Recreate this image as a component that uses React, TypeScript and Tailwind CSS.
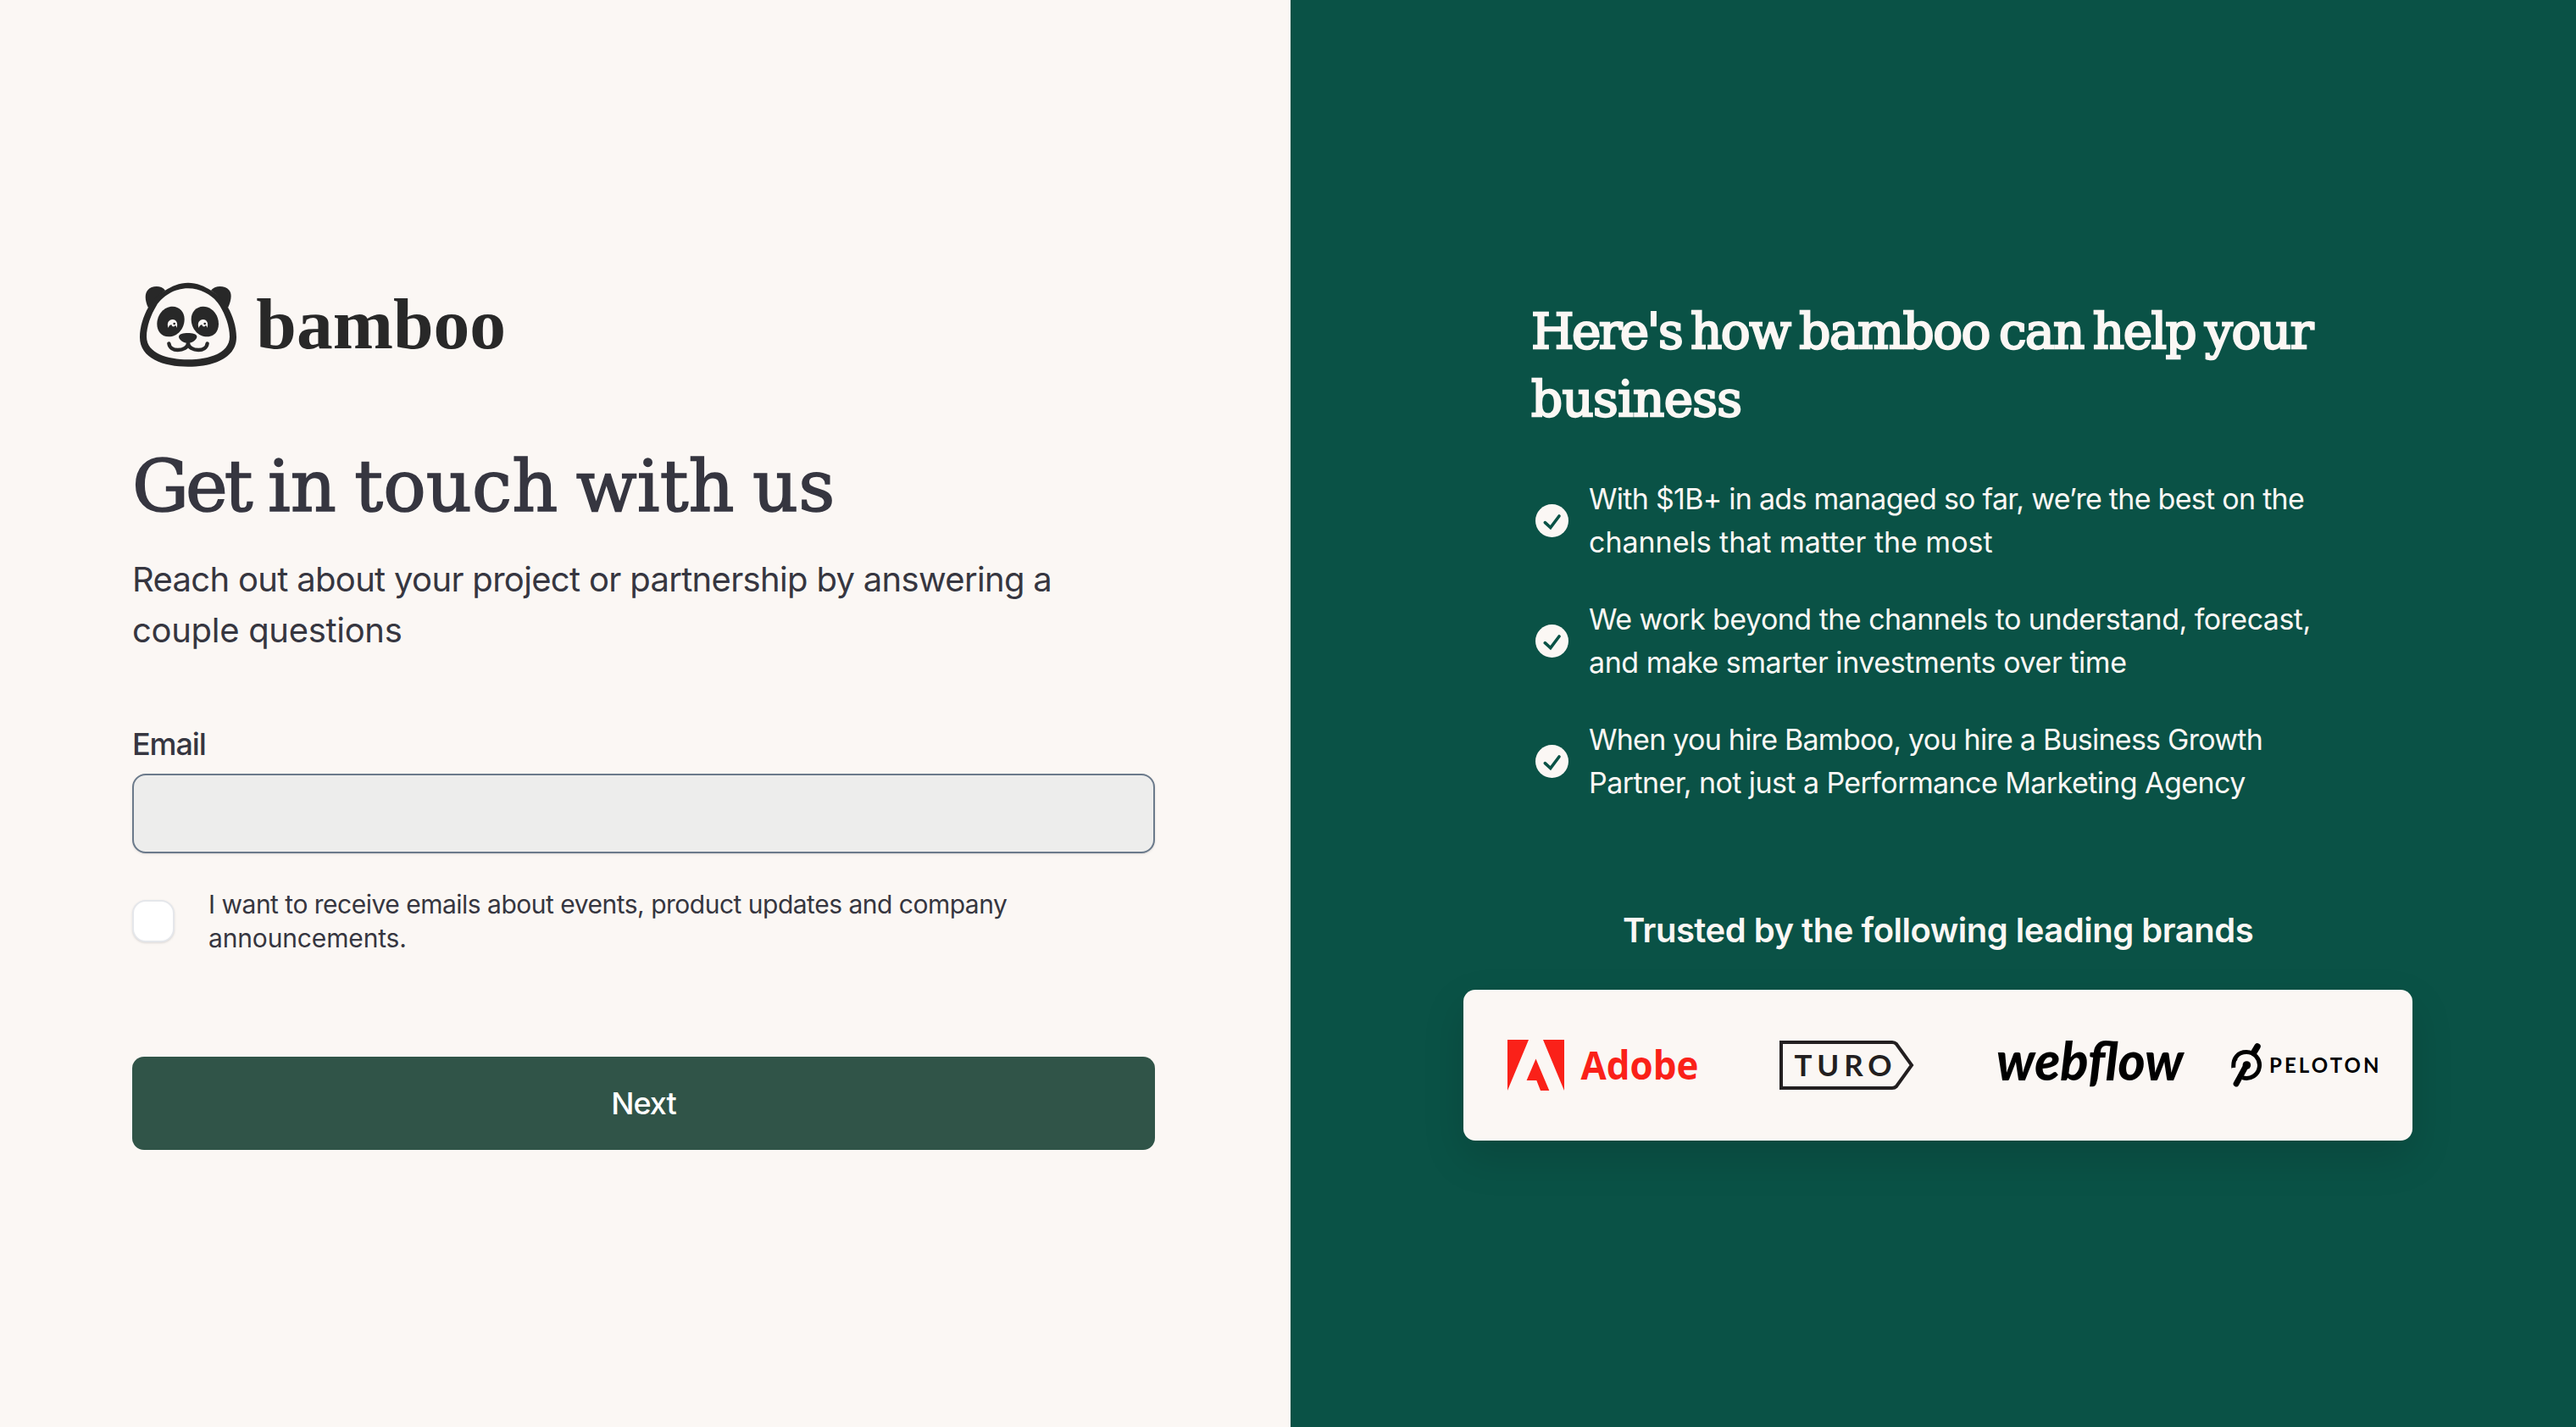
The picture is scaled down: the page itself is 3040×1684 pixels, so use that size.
import { useState } from "react";

type Line = { text: string; tracking: string };

const INTRO: Line[] = [
  { text: "Reach out about your project or partnership by answering a", tracking: "tracking-[-0.68px]" },
  { text: "couple questions", tracking: "tracking-[-0.3px]" },
];

const CONSENT: Line[] = [
  { text: "I want to receive emails about events, product updates and company", tracking: "tracking-[-0.5px]" },
  { text: "announcements.", tracking: "tracking-[-0.15px]" },
];

const BENEFITS: Line[][] = [
  [
    { text: "With $1B+ in ads managed so far, we’re the best on the", tracking: "tracking-[-0.72px]" },
    { text: "channels that matter the most", tracking: "tracking-[-0.03px]" },
  ],
  [
    { text: "We work beyond the channels to understand, forecast,", tracking: "tracking-[-0.53px]" },
    { text: "and make smarter investments over time", tracking: "tracking-[-0.44px]" },
  ],
  [
    { text: "When you hire Bamboo, you hire a Business Growth", tracking: "tracking-[-0.75px]" },
    { text: "Partner, not just a Performance Marketing Agency", tracking: "tracking-[-0.58px]" },
  ],
];

function Lines({ lines }: { lines: Line[] }) {
  return (
    <>
      {lines.map((line) => (
        <span key={line.text} className={`block whitespace-nowrap ${line.tracking}`}>
          {line.text}
        </span>
      ))}
    </>
  );
}

function BambooLogo() {
  return (
    <svg viewBox="48 60 1332 318" className="h-[106px] w-[444px]" role="img" aria-label="bamboo">
      <g fill="#282828">
        {/* ears */}
        <path d="M105 160C92 132 92 108 104 96C116 82 150 78 165 98C145 112 125 132 105 160Z" />
        <path d="M387 160C400 132 402 108 390 96C378 82 342 78 327 98C348 112 368 132 387 160Z" />
        {/* head outline */}
        <path
          fillRule="evenodd"
          d="M246 71C216 71 186 84 165 98C138 114 118 134 105 158C88 188 75 226 75 264C75 340 160 368 246 368C332 368 417 340 417 264C417 226 404 188 387 158C374 134 354 114 327 98C306 84 276 71 246 71ZM246 91C296 91 338 120 358 152C378 184 393 226 393 262C393 322 318 343 246 343C174 343 99 322 99 262C99 226 114 184 134 152C154 120 196 91 246 91Z"
        />
        {/* eye patches */}
        <path d="M191 155C215 155 233 174 233 200C233 234 208 262 177 262C151 262 136 243 136 217C136 184 160 155 191 155Z" />
        <path d="M299 155C275 155 257 174 257 200C257 234 282 262 313 262C339 262 354 243 354 217C354 184 330 155 299 155Z" />
        {/* nose */}
        <path d="M213 262C213 252 229 249 245 249C261 249 277 252 277 262C277 273 260 285 245 285C230 285 213 273 213 262Z" />
      </g>
      <path
        d="M178 286C180 302 194 309 209 309C228 309 246 300 246 284C246 300 264 309 283 309C298 309 312 302 314 286"
        fill="none"
        stroke="#282828"
        strokeWidth="13"
        strokeLinecap="round"
        strokeLinejoin="round"
      />
      <g fill="#fbf7f4">
        <path d="M176 231C169 214 178 201 191 201C204 201 212 215 205 231C204 224 202 222 199 222C199 226 196 227 192 226C189 225 188 223 188 220C182 219 178 223 176 231Z" />
        <path d="M284 231C277 214 286 201 299 201C312 201 320 215 313 231C312 224 310 222 307 222C307 226 304 227 300 226C297 225 296 223 296 220C290 219 286 223 284 231Z" />
      </g>
      <circle cx="197" cy="216" r="4" fill="#282828" />
      <circle cx="305" cy="216" r="4" fill="#282828" />
      <text
        x="487"
        y="304"
        textLength="884"
        lengthAdjust="spacingAndGlyphs"
        fill="#282828"
        className="font-['Liberation_Serif',serif] text-[254px] font-bold"
      >
        bamboo
      </text>
    </svg>
  );
}

function CheckBadge() {
  return (
    <svg viewBox="0 0 39 39" className="ml-[5px] h-[39px] w-[39px] shrink-0" aria-hidden="true">
      <circle cx="19.5" cy="19.5" r="19.5" fill="#fbf7f4" />
      <path
        d="M11.3 21.6 17.8 27.6 28 14"
        fill="none"
        stroke="#0a5246"
        strokeWidth="3.6"
        strokeLinecap="round"
        strokeLinejoin="miter"
      />
    </svg>
  );
}

function AdobeLogo() {
  return (
    <svg
      viewBox="0 0 226 60"
      className="h-[60px] w-[226px] overflow-visible"
      fill="#fa2119"
      role="img"
      aria-label="Adobe"
    >
      <path d="M0 0H25L0 60ZM42 0H67V60ZM33.5 22.5 49.3 60H39L34.3 48H22.6Z" />
      <text
        x="86.5"
        y="46.5"
        textLength="139"
        lengthAdjust="spacingAndGlyphs"
        className="font-['Open_Sans',sans-serif] text-[46px] font-bold"
      >
        Adobe
      </text>
    </svg>
  );
}

function TuroLogo() {
  return (
    <svg
      viewBox="0 0 160 60"
      className="ml-[95px] h-[60px] w-[160px] overflow-visible"
      role="img"
      aria-label="Turo"
    >
      <path d="M2 3H133Q136 3 138 5L156 30 138 55Q136 57 133 57H2Z" fill="none" stroke="#231f20" strokeWidth="4" />
      <text
        x="17.5"
        y="43"
        textLength="115"
        fill="#231f20"
        className="font-['Lato',sans-serif] text-[35px] font-bold"
      >
        TURO
      </text>
    </svg>
  );
}

function WebflowLogo() {
  return (
    <svg
      viewBox="0 0 222 60"
      className="ml-[99px] h-[60px] w-[222px] overflow-visible"
      role="img"
      aria-label="Webflow"
    >
      <text
        x="-3"
        y="48"
        textLength="221"
        lengthAdjust="spacingAndGlyphs"
        className="font-['Lato',sans-serif] text-[62px] font-black italic"
      >
        webflow
      </text>
    </svg>
  );
}

function PelotonLogo() {
  return (
    <svg
      viewBox="0 0 176 60"
      className="ml-[52px] h-[60px] w-[176px] overflow-visible"
      role="img"
      aria-label="Peloton"
    >
      <g fill="none" stroke="#000" strokeLinecap="round">
        <path d="M2.8 33C2 22 8 14.6 18 14.6A15.4 15.4 0 1 1 13.5 44.7" strokeWidth="5" strokeLinecap="butt" />
        <path d="M26.5 15.5 31 8" strokeWidth="7.5" />
        <path d="M18 30 6 52" strokeWidth="6.8" />
      </g>
      <path d="M.6 35C2 30 4 27 7.5 23.5L6 20 2 24Z" />
      <circle cx="18.4" cy="30" r="4.8" />
      <text x="45" y="38.8" textLength="129.5" className="font-['Lato',sans-serif] text-[24px] font-bold">
        PELOTON
      </text>
    </svg>
  );
}

function ContactForm() {
  const [email, setEmail] = useState("");

  return (
    <form
      className="flex w-[1523px] shrink-0 flex-col bg-[#fbf7f4] pt-[330px] pr-[160px] pl-[156px] text-[#363640]"
      onSubmit={(e) => e.preventDefault()}
    >
      <BambooLogo />
      <h1 className="mt-[88px] font-['DejaVu_Serif',serif] text-[84px] leading-[100px] tracking-[0.1px] whitespace-nowrap [word-spacing:-5.5px] [-webkit-text-stroke:1.6px_#363640]">
        <span className="tracking-[-4px]">Get</span> in touch with us
      </h1>
      <p className="mt-[30px] text-[40px] leading-[60px]">
        <Lines lines={INTRO} />
      </p>
      <label htmlFor="email" className="mt-[79px] text-4xl leading-[50px] font-medium tracking-[-1.1px]">
        Email
      </label>
      <input
        id="email"
        type="email"
        value={email}
        onChange={(e) => setEmail(e.target.value)}
        className="mt-[10px] h-[94px] w-full rounded-2xl border-2 border-[#6b7a8b] bg-[#ededec] px-6 text-4xl shadow-sm outline-none"
      />
      <label className="mt-10 flex items-center text-3xl leading-10">
        <input
          type="checkbox"
          className="mr-10 h-[50px] w-[50px] shrink-0 appearance-none rounded-2xl border-2 border-[#e5e7eb] bg-white shadow-sm"
        />
        <span>
          <Lines lines={CONSENT} />
        </span>
      </label>
      <button
        type="submit"
        className="mt-[120px] h-[110px] w-full rounded-[14px] bg-[#305448] text-4xl font-medium tracking-[-1px] text-white"
      >
        Next
      </button>
    </form>
  );
}

function BrandPanel() {
  return (
    <section className="flex flex-1 flex-col bg-[#0a5246] pt-[351px] text-[#fbf7f4]">
      <div className="ml-[284px]">
        <h2 className="font-['DejaVu_Serif',serif] text-[58px] leading-[80px] whitespace-nowrap [word-spacing:-6px] [-webkit-text-stroke:2.4px_#fbf7f4]">
          <span className="block tracking-[-1.5px]">
            <span className="tracking-[-2.6px]">Here's</span> how bamboo can help your
          </span>
          <span className="block tracking-[-0.7px]">business</span>
        </h2>
        <ul className="mt-[52px] flex flex-col gap-[39.6px] text-[34px] leading-[51.2px]">
          {BENEFITS.map((lines) => (
            <li key={lines[0].text} className="flex items-center gap-6">
              <CheckBadge />
              <span>
                <Lines lines={lines} />
              </span>
            </li>
          ))}
        </ul>
      </div>
      <div className="mt-[119px] ml-[204px] w-[1120px]">
        <h3 className="text-center text-[40px] leading-[60px] font-semibold tracking-[-0.5px]">
          Trusted by the following leading brands
        </h3>
        <div className="mt-10 flex h-[178px] items-center rounded-[14px] bg-[#fbf7f4] pl-[52px] shadow-[0_20px_50px_rgba(0,0,0,0.13)]">
          <AdobeLogo />
          <TuroLogo />
          <WebflowLogo />
          <PelotonLogo />
        </div>
      </div>
    </section>
  );
}

export default function App() {
  return (
    <main className="flex h-[1684px] w-[3040px] overflow-hidden font-['Inter',sans-serif]">
      <ContactForm />
      <BrandPanel />
    </main>
  );
}
